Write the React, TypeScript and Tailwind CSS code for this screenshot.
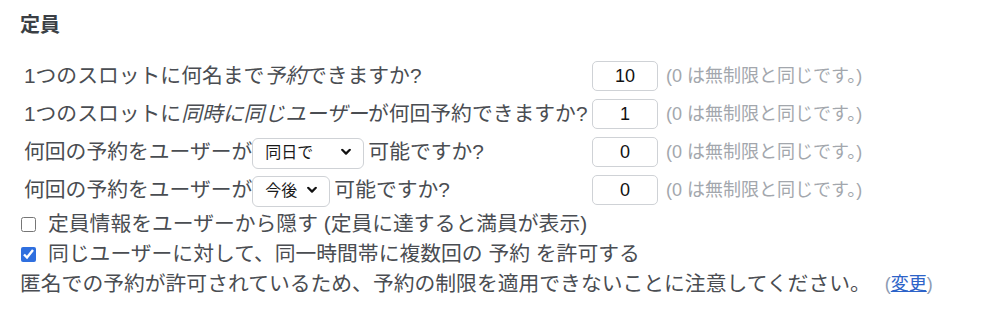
import { ReactNode } from "react";

function Chevron() {
  return (
    <svg
      className="pointer-events-none absolute right-[13px] top-1/2 -translate-y-1/2"
      width="10"
      height="7"
      viewBox="0 0 10 7"
      fill="none"
    >
      <path d="M1.2 1.3 5 5.1l3.8-3.8" stroke="#111" strokeWidth="2.2" strokeLinecap="round" strokeLinejoin="round" />
    </svg>
  );
}

function Select({ value, options, width }: { value: string; options: string[]; width: string }) {
  return (
    <span className={`relative ml-0 mr-1 inline-block ${width}`}>
      <select
        defaultValue={value}
        className="h-[31px] w-full appearance-none rounded-[6px] border border-[#cfd2d6] bg-white pl-3 text-[16px] text-[#1a1a1a] outline-none"
      >
        {options.map((o) => (
          <option key={o}>{o}</option>
        ))}
      </select>
      <Chevron />
    </span>
  );
}

const hint = "(0 は無制限と同じです。)";

const rows: { label: ReactNode; value: string }[] = [
  {
    label: (
      <span>
        1つのスロットに何名まで<em>予約</em>できますか?
      </span>
    ),
    value: "10",
  },
  {
    label: (
      <span>
        1つのスロットに<em>同時に同じユーザー</em>が何回予約できますか?
      </span>
    ),
    value: "1",
  },
  {
    label: (
      <span className="flex items-center">
        何回の予約をユーザーが
        <Select value="同日で" options={["同日で", "今後"]} width="w-[112px]" />
        可能ですか?
      </span>
    ),
    value: "0",
  },
  {
    label: (
      <span className="flex items-center">
        何回の予約をユーザーが
        <Select value="今後" options={["今後", "同日で"]} width="w-[78px]" />
        可能ですか?
      </span>
    ),
    value: "0",
  },
];

export default function App() {
  return (
    <div className="h-[315px] w-[984px] bg-white pl-5 pt-[10px] font-['Liberation_Sans','Noto_Sans_CJK_JP',sans-serif] text-[20.8px] text-[#4a4d52]">
      <h2 className="text-[20px] font-bold leading-[30px] text-[#3b3f45]">定員</h2>

      {/* limits table */}
      <div className="mt-[17px] grid grid-cols-[572px_74px_auto]">
        {rows.map((r, i) => (
          <div key={i} className="contents">
            <div className="flex h-[38px] items-center whitespace-nowrap pl-1">{r.label}</div>
            <div className="flex h-[38px] items-center">
              <input
                defaultValue={r.value}
                className="h-[30px] w-[66px] rounded-[5px] border border-[#cfd2d6] bg-white text-center text-[18px] text-[#111] outline-none"
              />
            </div>
            <div className="flex h-[38px] items-center whitespace-nowrap text-[18px] text-[#a3a7ad]">{hint}</div>
          </div>
        ))}
      </div>

      <label className="flex h-[30px] items-center">
        <input type="checkbox" className="ml-[1px] mr-[12px] h-[15px] w-[15px] accent-[#2f6fdf]" />
        定員情報をユーザーから隠す (定員に達すると満員が表示)
      </label>
      <label className="flex h-[30px] items-center">
        <input type="checkbox" defaultChecked className="ml-[1px] mr-[12px] h-[15px] w-[15px] accent-[#2f6fdf]" />
        同じユーザーに対して、同一時間帯に複数回の 予約 を許可する
      </label>
      <div className="flex h-[30px] items-center whitespace-nowrap">
        匿名での予約が許可されているため、予約の制限を適用できないことに注意してください。
        <span className="ml-[14px] text-[18px] text-[#8d9bb3]">
          (<a href="#" className="text-[#2d63c8] underline">変更</a>)
        </span>
      </div>
    </div>
  );
}
